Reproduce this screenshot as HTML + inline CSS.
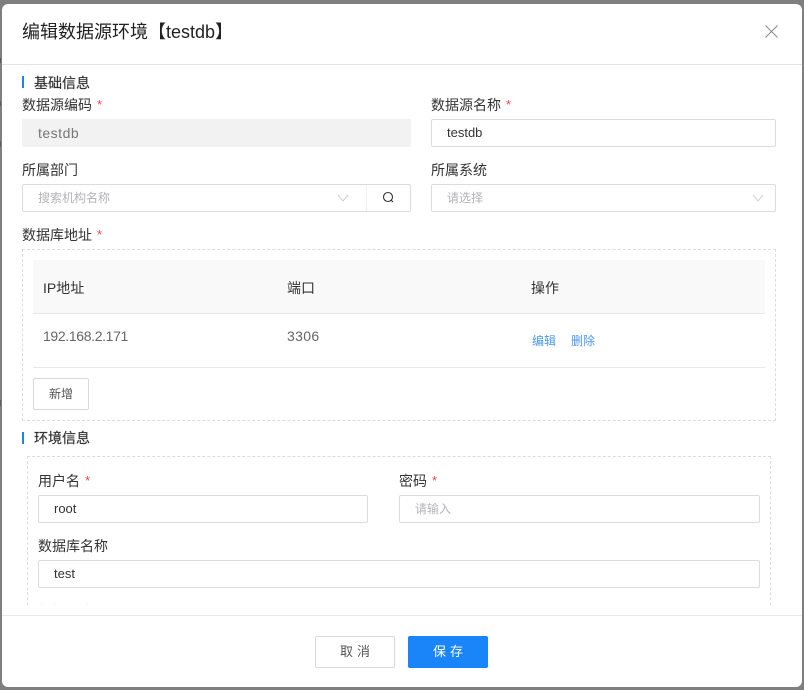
<!DOCTYPE html>
<html><head><meta charset="utf-8">
<style>
html,body{margin:0;padding:0;width:804px;height:690px;overflow:hidden;background:#7f7f7f}
body{position:relative;font-family:"Liberation Sans","Noto Sans CJK SC",sans-serif;color:#333}
#m{position:absolute;left:2px;top:4px;width:800px;height:683px;background:#fff;border-radius:6px;overflow:hidden}
.a{position:absolute;white-space:nowrap}
#w{position:absolute;left:0;top:0;width:804px;height:690px;filter:blur(.3px)}
.l{position:absolute;font-size:14px;line-height:20px;color:#333;white-space:nowrap}
.l i{font-style:normal;color:#f0444d;font-size:13px;margin-left:5px;position:relative;top:-1px}
.i{position:absolute;box-sizing:border-box;height:28px;border:1px solid #dcdcdc;border-radius:2px;background:#fff;font-size:13px;line-height:26px;padding-left:15px;color:#333;white-space:nowrap}
.p{color:#b4b4b8;font-size:12px}
.b{position:absolute;left:22px;width:2px;height:12px;background:#1d84e8}
.s{position:absolute;left:34px;font-size:14px;font-weight:400;line-height:18px;color:#333;-webkit-text-stroke:.2px #333}
.d{position:absolute;box-sizing:border-box;border:1px dashed #dcdcdc}
.t{position:absolute;font-size:14px;line-height:20px;white-space:nowrap}
svg{position:absolute}
</style></head>
<body>
<div id="bgf">
<div class="a" style="left:0;top:58px;width:1px;height:5px;background:#5a5a5a"></div>
<div class="a" style="left:0;top:101px;width:1px;height:5px;background:#5f5f5f"></div>
<div class="a" style="left:0;top:141px;width:1px;height:6px;background:#5f5f5f"></div>
<div class="a" style="left:0;top:400px;width:1px;height:6px;background:#5f5f5f"></div>
</div>
<div id="m">
<div id="w" style="left:-2px;top:-4px">
<div class="t" style="left:22px;top:20px;font-size:18px;line-height:24px;color:#222">编辑数据源环境【testdb】</div>
<svg style="left:764px;top:24px" width="15" height="15" viewBox="0 0 15 15"><path d="M1.5 1.5L13.5 13.5M13.5 1.5L1.5 13.5" stroke="#888" stroke-width="1" fill="none"/></svg>
<div class="a" style="left:0;top:64px;width:804px;height:1px;background:#e3e3e3"></div>

<div class="b" style="top:76px"></div>
<div class="s" style="top:74px">基础信息</div>

<div class="l" style="left:22px;top:95px">数据源编码<i>*</i></div>
<div class="i" style="left:22px;top:119px;width:389px;background:#f2f2f2;border-color:#f2f2f2;color:#777;font-size:14px;letter-spacing:.5px">testdb</div>
<div class="l" style="left:431px;top:95px">数据源名称<i>*</i></div>
<div class="i" style="left:431px;top:119px;width:345px">testdb</div>

<div class="l" style="left:22px;top:160px">所属部门</div>
<div class="i p" style="left:22px;top:184px;width:389px">搜索机构名称</div>
<div class="a" style="left:366px;top:185px;width:1px;height:26px;background:#f0f0f0"></div>
<svg style="left:337px;top:193px" width="12" height="10" viewBox="0 0 12 10"><path d="M1 2L6 8L11 2" stroke="#cfcfcf" stroke-width="1" fill="none"/></svg>
<svg style="left:382px;top:191px" width="13" height="13" viewBox="0 0 13 13"><circle cx="6" cy="6" r="4.5" stroke="#333" stroke-width="1.1" fill="none"/><path d="M9.2 9.2L11 11" stroke="#333" stroke-width="1.1"/></svg>
<div class="l" style="left:431px;top:160px">所属系统</div>
<div class="i p" style="left:431px;top:184px;width:345px">请选择</div>
<svg style="left:752px;top:193px" width="12" height="10" viewBox="0 0 12 10"><path d="M1 2L6 8L11 2" stroke="#cfcfcf" stroke-width="1" fill="none"/></svg>

<div class="l" style="left:22px;top:225px">数据库地址<i>*</i></div>
<div class="d" style="left:22px;top:249px;width:754px;height:172px"></div>
<div class="a" style="left:33px;top:260px;width:732px;height:53px;background:#f9f9f9"></div>
<div class="a" style="left:33px;top:313px;width:732px;height:1px;background:#e8e8ec"></div>
<div class="a" style="left:33px;top:367px;width:732px;height:1px;background:#e8e8ec"></div>
<div class="t" style="left:43px;top:278px;color:#333">IP地址</div>
<div class="t" style="left:287px;top:278px;color:#333">端口</div>
<div class="t" style="left:531px;top:278px;color:#333">操作</div>
<div class="t" style="left:43px;top:326px;color:#666;letter-spacing:-.35px">192.168.2.171</div>
<div class="t" style="left:287px;top:326px;color:#666;letter-spacing:.35px">3306</div>
<div class="t" style="left:532px;top:331px;font-size:12px;color:#4a98ea">编辑</div>
<div class="t" style="left:571px;top:331px;font-size:12px;color:#4a98ea">删除</div>
<div class="a" style="left:33px;top:378px;width:56px;height:32px;box-sizing:border-box;border:1px solid #d9d9d9;border-radius:2px;text-align:center;font-size:12px;line-height:30px;color:#555">新增</div>

<div class="b" style="top:432px"></div>
<div class="s" style="top:429px">环境信息</div>

<div class="a" style="left:0;top:456px;width:804px;height:149px;overflow:hidden">
<div class="d" style="left:27px;top:0;width:744px;height:200px"></div>
<div class="l" style="left:38px;top:15px">用户名<i>*</i></div>
<div class="i" style="left:38px;top:39px;width:330px">root</div>
<div class="l" style="left:399px;top:15px">密码<i>*</i></div>
<div class="i p" style="left:399px;top:39px;width:361px">请输入</div>
<div class="l" style="left:38px;top:80px">数据库名称</div>
<div class="i" style="left:38px;top:104px;width:722px">test</div>
<div class="l" style="left:38px;top:146px;color:#777">数据库类型</div>
</div>

<div class="a" style="left:0;top:615px;width:804px;height:1px;background:#e8e8e8"></div>
<div class="a" style="left:315px;top:636px;width:80px;height:32px;box-sizing:border-box;border:1px solid #d9d9d9;border-radius:2px;text-align:center;font-size:13px;line-height:30px;color:#555;letter-spacing:4px;text-indent:4px">取消</div>
<div class="a" style="left:408px;top:636px;width:80px;height:32px;background:#1a85f8;border-radius:2px;text-align:center;font-size:13px;line-height:32px;color:#fff;letter-spacing:4px;text-indent:4px">保存</div>
</div>
</div>
</body></html>
